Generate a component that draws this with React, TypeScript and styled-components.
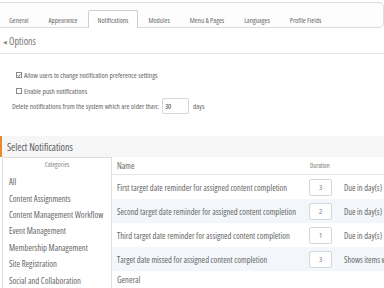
import React from 'react';
import styled, { createGlobalStyle } from 'styled-components';

const Global = createGlobalStyle`
  html, body { margin: 0; padding: 0; background: #fff; }
  body {
    width: 384px; height: 288px; overflow: hidden;
    font-family: "Open Sans", "Noto Sans", sans-serif;
    font-stretch: condensed;
    color: #666;
  }
`;

const Page = styled.div`
  width: 384px;
  display: flex;
  flex-direction: column;
`;

const TabStrip = styled.div`
  margin-top: 2px;
  height: 24px;
  border: 1px solid #dcdcdc;
  border-left: none;
  border-radius: 0 5px 5px 0;
  background: #fdfdfd;
  display: flex;
  align-items: flex-end;
`;

const Tab = styled.div<{ $active?: boolean }>`
  height: 17px;
  padding: 0 ${p => (p.$active ? 9 : 10)}px;
  display: flex;
  align-items: center;
  font-size: 7.1px;
  color: #6a6a6a;
  white-space: nowrap;
  margin-bottom: -1px;
  background: ${p => (p.$active ? '#fff' : 'transparent')};
  border: ${p => (p.$active ? '1px solid #cfcfcf' : 'none')};
  border-bottom: none;
  border-radius: 2px 2px 0 0;
  &:first-child { padding-left: 9px; }
`;

const OptionsHeader = styled.div`
  height: 20px;
  padding: 0 0 5px 3px;
  border-bottom: 1px solid #e6e6e6;
  display: flex;
  align-items: flex-end;
  font-size: 10px;
  color: #777;
  gap: 2px;
`;

const Caret = styled.span`
  font-size: 5px;
  color: #888;
  margin-bottom: 3px;
`;

const OptionsBody = styled.div`
  padding: 15px 0 0 12px;
  display: flex;
  flex-direction: column;
  gap: 4px;
`;

const CheckRow = styled.label`
  height: 12px;
  display: flex;
  align-items: center;
  gap: 2px;
  padding-left: 4px;
  font-size: 7.3px;
`;

const Box = styled.span`
  width: 6px;
  height: 6px;
  border: 1px solid #888;
  box-sizing: border-box;
  background: #fff;
  display: inline-flex;
  align-items: center;
  justify-content: center;
`;

const DeleteRow = styled.div`
  margin-top: -3px;
  height: 16px;
  display: flex;
  align-items: center;
  font-size: 7.4px;
  white-space: nowrap;
`;

const SmallInput = styled.div<{ $w: number; $center?: boolean; $h?: number; $flush?: boolean }>`
  width: ${p => p.$w}px;
  height: ${p => p.$h || 16}px;
  box-sizing: border-box;
  border: 1px solid #d6d6d6;
  border-radius: 2px;
  background: #fff;
  display: flex;
  align-items: center;
  justify-content: ${p => (p.$center ? 'center' : 'flex-start')};
  padding: 0 2px;
  font-size: 7.5px;
  color: ${p => (p.$center ? '#777' : '#444')};
  margin: ${p => (p.$flush ? '0' : '0 4px 0 3px')};
`;

const SelectHeader = styled.div`
  margin-top: 22px;
  height: 21px;
  background: #f6f6f6;
  border-left: 2px solid #e8892b;
  padding-left: 5px;
  display: flex;
  align-items: center;
  font-size: 10px;
  color: #5a5a5a;
`;

const Main = styled.div`
  display: grid;
  grid-template-columns: 110px 1fr;
  margin-left: 2px;
`;

const CategoryBox = styled.div`
  border: 1px solid #dedede;
  height: 140px;
  box-sizing: border-box;
`;

const CategoryHead = styled.div`
  height: 13px;
  display: flex;
  align-items: center;
  justify-content: center;
  font-size: 6.8px;
  color: #888;
  margin-bottom: 3px;
`;

const CategoryItem = styled.div`
  height: 16.4px;
  display: flex;
  align-items: center;
  padding-left: 6px;
  font-size: 8.6px;
  white-space: nowrap;
`;

const Table = styled.div`
  display: flex;
  flex-direction: column;
`;

const Row = styled.div<{ $h: number; $shade?: boolean; $head?: boolean }>`
  height: ${p => p.$h}px;
  display: grid;
  grid-template-columns: 197px 29px 1fr;
  align-items: center;
  background: ${p => (p.$shade ? '#f3f7fb' : '#fff')};
  border-bottom: ${p => (p.$head ? '1px solid #e8e8e8' : 'none')};
  box-sizing: border-box;
  font-size: 8.5px;
  white-space: nowrap;
  overflow: hidden;
`;

const NameCell = styled.div`
  padding-left: 5px;
`;

const DurHead = styled.div`
  font-size: 6.5px;
  color: #777;
  padding-left: 1px;
`;

const Note = styled.div`
  padding-left: 6px;
  font-size: 8.4px;
`;

const tabs = ['General', 'Appearance', 'Notifications', 'Modules', 'Menu & Pages', 'Languages', 'Profile Fields'];
const cats = ['All', 'Content Assignments', 'Content Management Workflow', 'Event Management', 'Membership Management', 'Site Registration', 'Social and Collaboration'];
const rows = [
  { name: 'First target date reminder for assigned content completion', v: '3', note: 'Due in day(s)' },
  { name: 'Second target date reminder for assigned content completion', v: '2', note: 'Due in day(s)' },
  { name: 'Third target date reminder for assigned content completion', v: '1', note: 'Due in day(s)' },
  { name: 'Target date missed for assigned content completion', v: '3', note: 'Shows items which' },
];

export default function App() {
  return (
    <Page>
      <Global />
      <TabStrip>
        {tabs.map(t => (
          <Tab key={t} $active={t === 'Notifications'}>{t}</Tab>
        ))}
      </TabStrip>
      <OptionsHeader>
        <Caret>◀</Caret>Options
      </OptionsHeader>
      <OptionsBody>
        <CheckRow>
          <Box>
            <svg width="5" height="5" viewBox="0 0 10 10">
              <path d="M1.5 5 L4 7.5 L8.5 2" fill="none" stroke="#333" strokeWidth="1.8" />
            </svg>
          </Box>
          Allow users to change notification preference settings
        </CheckRow>
        <CheckRow>
          <Box />
          Enable push notifications
        </CheckRow>
        <DeleteRow>
          Delete notifications from the system which are older than:
          <SmallInput $w={27}>30</SmallInput>
          days
        </DeleteRow>
      </OptionsBody>
      <SelectHeader>Select Notifications</SelectHeader>
      <Main>
        <CategoryBox>
          <CategoryHead>Categories</CategoryHead>
          {cats.map(c => (
            <CategoryItem key={c}>{c}</CategoryItem>
          ))}
        </CategoryBox>
        <Table>
          <Row $h={18} $head>
            <NameCell>Name</NameCell>
            <DurHead>Duration</DurHead>
            <div />
          </Row>
          {rows.map((r, i) => (
            <Row key={r.name} $h={24} $shade={i % 2 === 1}>
              <NameCell>{r.name}</NameCell>
              <SmallInput $w={23} $h={17} $center $flush>{r.v}</SmallInput>
              <Note>{r.note}</Note>
            </Row>
          ))}
          <Row $h={16}>
            <NameCell>General</NameCell>
          </Row>
        </Table>
      </Main>
    </Page>
  );
}
